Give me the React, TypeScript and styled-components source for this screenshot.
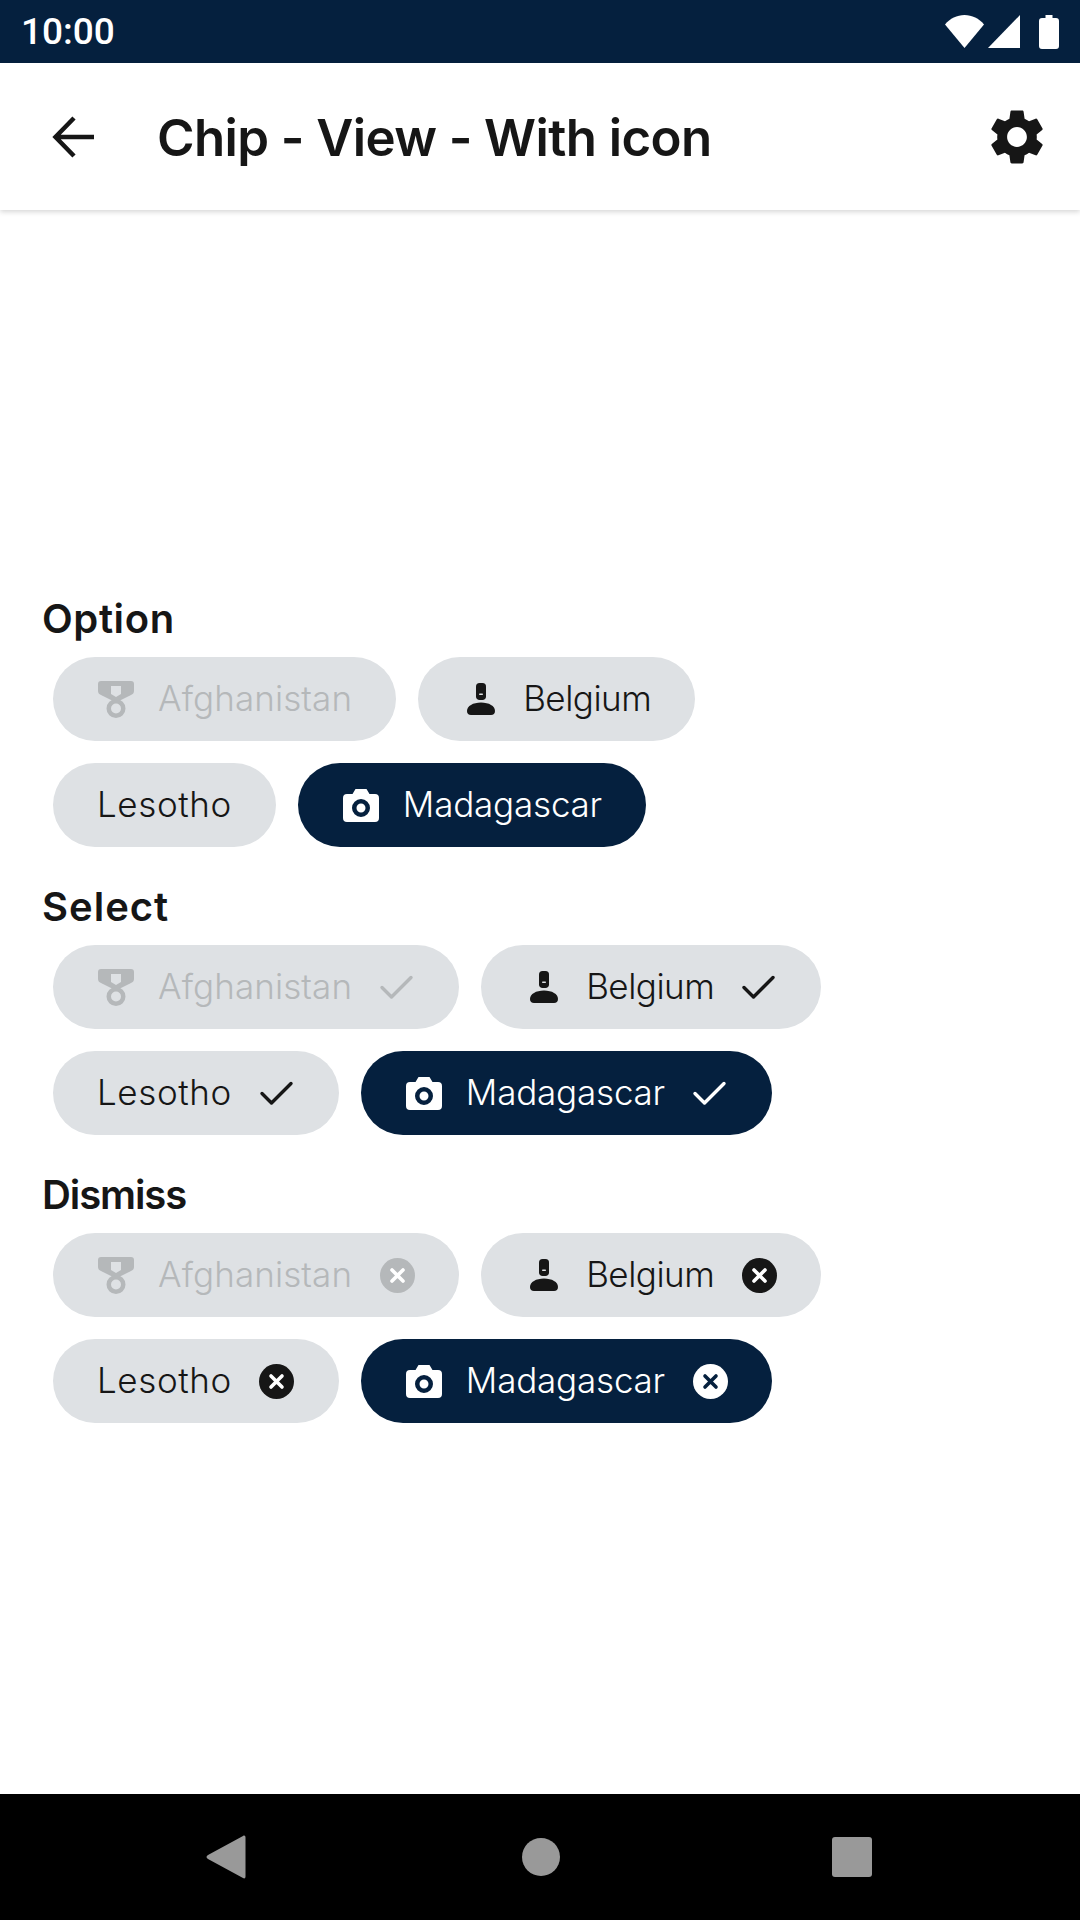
import React from "react";
import styled, { createGlobalStyle } from "styled-components";

const NAVY = "#05203e";
const INK = "#161616";
const CHIP_GREY = "#dee1e4";

const GlobalStyle = createGlobalStyle`
  html, body {
    margin: 0;
    padding: 0;
    background: #fff;
  }
  body {
    font-family: "Inter", "Liberation Sans", sans-serif;
  }
`;

const Screen = styled.div`
  width: 1080px;
  height: 1920px;
  display: flex;
  flex-direction: column;
  background: #fff;
  overflow: hidden;
`;

const StatusBar = styled.div`
  height: 63px;
  flex: none;
  display: flex;
  align-items: center;
  justify-content: space-between;
  padding: 0 21px 0 21px;
  background: ${NAVY};
  color: #fff;
`;

const Clock = styled.span`
  font-family: "Roboto", "Liberation Sans", sans-serif;
  font-size: 37px;
  font-weight: 500;
  line-height: 63px;
`;

const StatusIcons = styled.div`
  display: flex;
  align-items: center;
  gap: 4px;
`;

const Toolbar = styled.header`
  height: 147px;
  flex: none;
  display: flex;
  align-items: center;
  padding: 0 30px 0 43px;
  background: #fff;
  box-shadow: 0 2px 5px rgba(0, 0, 0, 0.16);
`;

const ToolbarTitle = styled.h1`
  flex: 1;
  margin: 1px 0 0 52px;
  font-size: 51px;
  font-weight: 600;
  letter-spacing: -0.6px;
  color: ${INK};
`;

const Main = styled.main`
  flex: 1;
  display: flex;
  flex-direction: column;
  gap: 34px;
  padding: 383px 0 0 53px;
`;

const Section = styled.section`
  display: flex;
  flex-direction: column;
  gap: 22px;
`;

const SectionTitle = styled.h2<{ $tracking: number }>`
  margin: 1px 0 -9px -11px;
  height: 50px;
  font-size: 40px;
  line-height: 50px;
  font-weight: 600;
  letter-spacing: ${(p) => p.$tracking}px;
  color: ${INK};
`;

const ChipRow = styled.div`
  display: flex;
  gap: 22px;
`;

type Variant = "default" | "disabled" | "active";

const chipBg = (v: Variant) => (v === "active" ? NAVY : CHIP_GREY);
const chipFg = (v: Variant) =>
  v === "active" ? "#fff" : v === "disabled" ? "#b5b8ba" : INK;

const ChipBox = styled.div<{ $variant: Variant }>`
  height: 84px;
  box-sizing: border-box;
  display: flex;
  align-items: center;
  padding: 0 44px;
  border-radius: 42px;
  background: ${(p) => chipBg(p.$variant)};
  color: ${(p) => chipFg(p.$variant)};
`;

const Leading = styled.span`
  width: 36px;
  height: 40px;
  flex: none;
  margin: 0 24px 0 1px;
  display: flex;
  align-items: center;
  justify-content: center;
`;

const Trailing = styled.span`
  width: 36px;
  height: 40px;
  flex: none;
  margin-left: 27px;
  display: flex;
  align-items: center;
  justify-content: center;
`;

const ChipLabel = styled.span<{ $tracking: number }>`
  margin-top: -2px;
  font-size: 35px;
  line-height: 44px;
  font-weight: 350;
  letter-spacing: ${(p) => p.$tracking}px;
`;

const NavBar = styled.nav`
  height: 126px;
  flex: none;
  display: grid;
  grid-template-columns: 316px 310px 40px;
  justify-items: start;
  align-items: center;
  padding-left: 206px;
  background: #000;
`;

const MedalIcon = () => (
  <svg width="36" height="37" viewBox="0 0 36 37" fill="currentColor" fillRule="evenodd">
    <path d="M3 0h30a3 3 0 0 1 3 3v7c0 2-1 3-3 4l-11 5.500h-8L3 14c-2-1-3-2-3-4V3a3 3 0 0 1 3-3zm10 5v8l5 3 5-3V5z" />
    <path d="M18 18a9.500 9.500 0 1 1 0 19 9.500 9.500 0 0 1 0-19zm0 4.500a5 5 0 1 0 0 10 5 5 0 0 0 0-10z" />
  </svg>
);

const PersonIcon = () => (
  <svg width="28" height="32" viewBox="0 0 28 32">
    <path
      fill="currentColor"
      d="M9 3.500A3.500 3.500 0 0 1 12.500 0h3A3.500 3.500 0 0 1 19 3.500v10c0 2-1.500 3.500-3.500 3.500h-3C10.500 17 9 15.500 9 13.500z"
    />
    <rect x="12" y="10.500" width="4" height="1.500" rx=".7" fill={CHIP_GREY} />
    <path
      fill="currentColor"
      d="M14 19.500c8 0 14 3.500 14 8.500 0 2.400-1.500 4-4 4H4c-2.500 0-4-1.600-4-4 0-5 6-8.500 14-8.500z"
    />
  </svg>
);

const CameraIcon = () => (
  <svg width="36" height="33" viewBox="0 0 36 33">
    <path
      fill="#fff"
      fillRule="evenodd"
      d="M12.500 0h11l3 5H32a4 4 0 0 1 4 4v20a4 4 0 0 1-4 4H4a4 4 0 0 1-4-4V9a4 4 0 0 1 4-4h5.500zM18 10a9 9 0 1 0 0 18 9 9 0 0 0 0-18zm0 4.500a4.500 4.500 0 1 1 0 9 4.500 4.500 0 0 1 0-9z"
    />
  </svg>
);

const CheckIcon = () => (
  <svg width="36" height="28" viewBox="0 0 36 28" fill="none">
    <path
      d="M3 14.500l9.500 9.500L32 4.500"
      stroke="currentColor"
      strokeWidth="3.400"
      strokeLinecap="round"
      strokeLinejoin="round"
    />
  </svg>
);

const DismissIcon = ({ variant }: { variant: Variant }) => (
  <svg width="35" height="35" viewBox="0 0 35 35">
    <circle cx="17.500" cy="17.500" r="17.500" fill="currentColor" />
    <path
      d="M12 12l11 11M23 12L12 23"
      stroke={variant === "active" ? NAVY : "#fff"}
      strokeWidth="3.600"
      strokeLinecap="round"
    />
  </svg>
);

const leadingIcons: Record<string, React.ReactNode> = {
  medal: <MedalIcon />,
  person: <PersonIcon />,
  camera: <CameraIcon />,
};

type Kind = "option" | "select" | "dismiss";

const Chip: React.FC<{
  label: string;
  tracking: number;
  icon?: string;
  kind: Kind;
  variant?: Variant;
}> = ({ label, tracking, icon, kind, variant = "default" }) => (
  <ChipBox $variant={variant}>
    {icon && <Leading>{leadingIcons[icon]}</Leading>}
    <ChipLabel $tracking={tracking}>{label}</ChipLabel>
    {kind === "select" && (
      <Trailing>
        <CheckIcon />
      </Trailing>
    )}
    {kind === "dismiss" && (
      <Trailing>
        <DismissIcon variant={variant} />
      </Trailing>
    )}
  </ChipBox>
);

const sections: { title: string; kind: Kind; tracking: number }[] = [
  { title: "Option", kind: "option", tracking: 0.6 },
  { title: "Select", kind: "select", tracking: 1 },
  { title: "Dismiss", kind: "dismiss", tracking: -1.1 },
];

const App: React.FC = () => {
  return (
    <Screen>
      <GlobalStyle />
      <StatusBar>
        <Clock>10:00</Clock>
        <StatusIcons>
          <svg width="39" height="33" viewBox="0 0 39 33">
            <path fill="#fff" d="M0 9.500C5 3.500 12 0 19.500 0S34 3.500 39 9.500L19.500 33z" />
          </svg>
          <svg width="32" height="33" viewBox="0 0 32 33">
            <path fill="#fff" d="M32 0v33H0z" />
          </svg>
          <svg width="20" height="34" viewBox="0 0 20 34" style={{ marginLeft: 15 }}>
            <path
              fill="#fff"
              d="M6.500 0h7v3H17a3 3 0 0 1 3 3v25a3 3 0 0 1-3 3H3a3 3 0 0 1-3-3V6a3 3 0 0 1 3-3h3.500z"
            />
          </svg>
        </StatusIcons>
      </StatusBar>
      <Toolbar>
        <svg width="62" height="62" viewBox="0 0 62 62" fill="none">
          <path d="M51 31H13M31 12L12.500 31 31 50" stroke={INK} strokeWidth="4.500" />
        </svg>
        <ToolbarTitle>Chip - View - With icon</ToolbarTitle>
        <svg width="66" height="66" viewBox="0 0 24 24" fill={INK}>
          <path d="M19.140 12.940c.04-.3.06-.61.06-.94 0-.32-.02-.64-.07-.94l2.030-1.580c.18-.14.23-.41.12-.61l-1.920-3.320c-.12-.22-.37-.29-.59-.22l-2.390.96c-.5-.38-1.030-.7-1.620-.94l-.36-2.540c-.04-.24-.24-.41-.48-.41h-3.840c-.24 0-.43.17-.47.41l-.36 2.540c-.59.24-1.130.57-1.620.94l-2.390-.96c-.22-.08-.47 0-.59.22L2.740 8.870c-.12.21-.08.47.12.61l2.030 1.580c-.05.3-.09.63-.09.94s.02.64.07.94l-2.030 1.580c-.18.14-.23.41-.12.61l1.920 3.320c.12.22.37.29.59.22l2.390-.96c.5.38 1.030.7 1.620.94l.36 2.540c.05.24.24.41.48.41h3.840c.24 0 .44-.17.47-.41l.36-2.540c.59-.24 1.130-.56 1.620-.94l2.390.96c.22.08.47 0 .59-.22l1.920-3.320c.12-.22.07-.47-.12-.61l-2.010-1.580zM12 15.600c-1.980 0-3.600-1.620-3.600-3.600s1.620-3.600 3.600-3.600 3.600 1.620 3.600 3.600-1.620 3.600-3.600 3.600z" />
        </svg>
      </Toolbar>
      <Main>
        {sections.map(({ title, kind, tracking }) => (
          <Section key={title}>
            <SectionTitle $tracking={tracking}>{title}</SectionTitle>
            <ChipRow>
              <Chip label="Afghanistan" tracking={0.1} icon="medal" kind={kind} variant="disabled" />
              <Chip label="Belgium" tracking={-0.5} icon="person" kind={kind} />
            </ChipRow>
            <ChipRow>
              <Chip label="Lesotho" tracking={0.6} kind={kind} />
              <Chip label="Madagascar" tracking={-0.2} icon="camera" kind={kind} variant="active" />
            </ChipRow>
          </Section>
        ))}
      </Main>
      <NavBar>
        <svg width="40" height="44" viewBox="0 0 40 44">
          <path fill="#999" d="M37 1c1.400-1 2.500-.2 2.500 1.500v39c0 1.700-1.100 2.500-2.500 1.500L2 24c-2-1.100-2-2.900 0-4z" />
        </svg>
        <svg width="38" height="38" viewBox="0 0 38 38">
          <circle cx="19" cy="19" r="19" fill="#999" />
        </svg>
        <svg width="40" height="40" viewBox="0 0 40 40">
          <rect width="40" height="40" rx="3" fill="#999" />
        </svg>
      </NavBar>
    </Screen>
  );
};

export default App;
